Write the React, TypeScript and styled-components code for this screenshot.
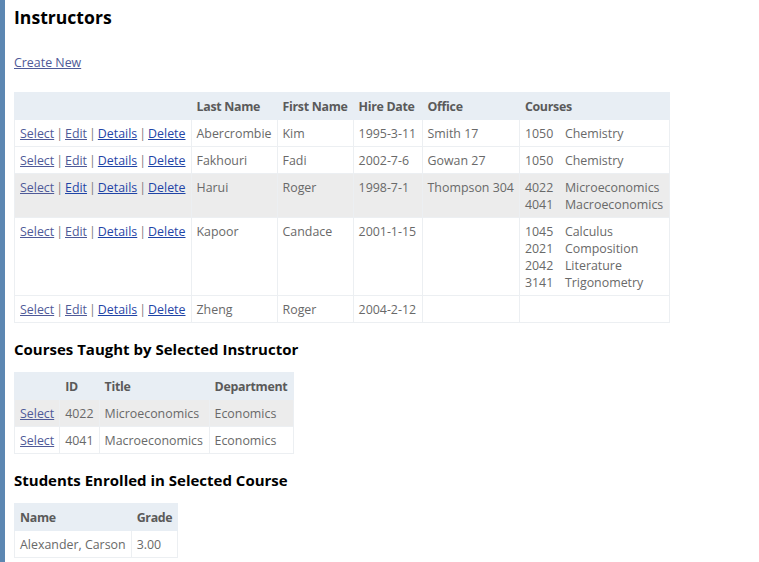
import React from 'react';
import styled, {createGlobalStyle} from 'styled-components';

const GlobalStyle = createGlobalStyle`
  html, body {
    margin: 0;
    padding: 0;
    background: #fff;
  }
  body {
    font-family: 'Open Sans', 'Liberation Sans', sans-serif;
    font-size: 12.4px;
    color: #696969;
  }
`;

const Page = styled.div`
  min-height: 562px;
  border-left: 5px solid #5c87b2;
  padding: 0 9px;
  box-sizing: border-box;
`;

const Title = styled.h2`
  margin: 0;
  padding-top: 5px;
  font-size: 17.6px;
  line-height: 24px;
  font-weight: 700;
  color: #000;
`;

const ActionLine = styled.p`
  margin: 25px 0 0;
  line-height: 17px;
`;

const SubTitle = styled.h3`
  margin: 0;
  padding: 16px 0 13px;
  font-size: 15px;
  line-height: 20px;
  font-weight: 700;
  color: #000;
`;

const Link = styled.a<{$visited?: boolean}>`
  color: ${({$visited}) => ($visited ? '#4f5a98' : '#1f44a6')};
  text-decoration: underline;
  cursor: pointer;
`;

const Sep = styled.span`
  color: #7a7a7a;
  margin: 0 2px;
`;

const Table = styled.table<{$top?: number}>`
  border-collapse: collapse;
  border: 1px solid #e8eef4;
  margin-top: ${({$top}) => $top ?? 0}px;
`;

const Th = styled.th`
  text-align: left;
  padding: 5px 5px 4px;
  line-height: 17px;
  background: #e8eef4;
  border: 1px solid #e8eef4;
  color: #5a5a5a;
  font-weight: 700;
  letter-spacing: -0.3px;
  white-space: nowrap;
`;

const Tr = styled.tr<{$selected?: boolean}>`
  background: ${({$selected}) => ($selected ? '#ececec' : '#fff')};
`;

const Td = styled.td`
  padding: 5px 5px 4px;
  line-height: 17px;
  vertical-align: top;
  border: 1px solid #eceff2;
  white-space: nowrap;
`;

const CourseList = styled.div`
  display: grid;
  grid-template-columns: 40px auto;
`;

type Instructor = {
  last: string;
  first: string;
  hire: string;
  office: string;
  courses: [string, string][];
  selected?: boolean;
  editVisited: boolean;
};

const instructors: Instructor[] = [
  {last: 'Abercrombie', first: 'Kim', hire: '1995-3-11', office: 'Smith 17', courses: [['1050', 'Chemistry']], editVisited: true},
  {last: 'Fakhouri', first: 'Fadi', hire: '2002-7-6', office: 'Gowan 27', courses: [['1050', 'Chemistry']], editVisited: true},
  {
    last: 'Harui',
    first: 'Roger',
    hire: '1998-7-1',
    office: 'Thompson 304',
    courses: [
      ['4022', 'Microeconomics'],
      ['4041', 'Macroeconomics'],
    ],
    selected: true,
    editVisited: false,
  },
  {
    last: 'Kapoor',
    first: 'Candace',
    hire: '2001-1-15',
    office: '',
    courses: [
      ['1045', 'Calculus'],
      ['2021', 'Composition'],
      ['2042', 'Literature'],
      ['3141', 'Trigonometry'],
    ],
    editVisited: true,
  },
  {last: 'Zheng', first: 'Roger', hire: '2004-2-12', office: '', courses: [], editVisited: true},
];

const courses = [
  {id: '4022', title: 'Microeconomics', dept: 'Economics', selected: true},
  {id: '4041', title: 'Macroeconomics', dept: 'Economics'},
];

const RowActions: React.FC<{editVisited: boolean}> = ({editVisited}) => (
  <>
    <Link $visited>Select</Link>
    <Sep>|</Sep>
    <Link $visited={editVisited}>Edit</Link>
    <Sep>|</Sep>
    <Link>Details</Link>
    <Sep>|</Sep>
    <Link>Delete</Link>
  </>
);

export default function App() {
  return (
    <Page>
      <GlobalStyle />
      <Title>Instructors</Title>
      <ActionLine>
        <Link $visited>Create New</Link>
      </ActionLine>
      <Table $top={21}>
        <colgroup>
          <col style={{width: 176}} />
          <col style={{width: 86}} />
          <col style={{width: 76}} />
          <col style={{width: 69}} />
          <col style={{width: 96}} />
          <col style={{width: 150}} />
        </colgroup>
        <thead>
          <tr>
            <Th />
            <Th>Last Name</Th>
            <Th>First Name</Th>
            <Th>Hire Date</Th>
            <Th>Office</Th>
            <Th>Courses</Th>
          </tr>
        </thead>
        <tbody>
          {instructors.map((ins) => (
            <Tr key={ins.last} $selected={ins.selected}>
              <Td>
                <RowActions editVisited={ins.editVisited} />
              </Td>
              <Td>{ins.last}</Td>
              <Td>{ins.first}</Td>
              <Td>{ins.hire}</Td>
              <Td>{ins.office}</Td>
              <Td>
                <CourseList>
                  {ins.courses.map(([id, title]) => (
                    <React.Fragment key={id}>
                      <span>{id}</span>
                      <span>{title}</span>
                    </React.Fragment>
                  ))}
                </CourseList>
              </Td>
            </Tr>
          ))}
        </tbody>
      </Table>

      <SubTitle>Courses Taught by Selected Instructor</SubTitle>
      <Table>
        <colgroup>
          <col style={{width: 44}} />
          <col style={{width: 38}} />
          <col style={{width: 110}} />
          <col style={{width: 84}} />
        </colgroup>
        <thead>
          <tr>
            <Th />
            <Th>ID</Th>
            <Th>Title</Th>
            <Th>Department</Th>
          </tr>
        </thead>
        <tbody>
          {courses.map((c) => (
            <Tr key={c.id} $selected={c.selected}>
              <Td>
                <Link $visited>Select</Link>
              </Td>
              <Td>{c.id}</Td>
              <Td>{c.title}</Td>
              <Td>{c.dept}</Td>
            </Tr>
          ))}
        </tbody>
      </Table>

      <SubTitle>Students Enrolled in Selected Course</SubTitle>
      <Table>
        <colgroup>
          <col style={{width: 114}} />
          <col style={{width: 46}} />
        </colgroup>
        <thead>
          <tr>
            <Th>Name</Th>
            <Th>Grade</Th>
          </tr>
        </thead>
        <tbody>
          <Tr>
            <Td>Alexander, Carson</Td>
            <Td>3.00</Td>
          </Tr>
        </tbody>
      </Table>
    </Page>
  );
}
